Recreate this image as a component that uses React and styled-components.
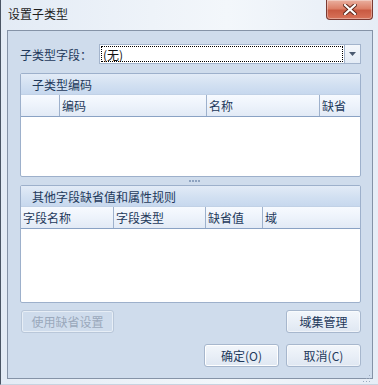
import React from "react";
import styled, { createGlobalStyle } from "styled-components";

const Global = createGlobalStyle`
  html, body { margin: 0; padding: 0; }
  body { width: 378px; height: 385px; overflow: hidden; font-family: "Noto Sans CJK SC", "Noto Sans", sans-serif; font-size: 12px; }
`;

const Window = styled.div`
  width: 378px;
  height: 385px;
  box-sizing: border-box;
  display: flex;
  flex-direction: column;
  background: linear-gradient(90deg, #e3ebf5 0%, #eef3f9 40%, #f3f7fb 60%, #e6edf6 100%);
  border-left: 1px solid #4a5564;
  border-bottom: 1px solid #c8d3e0;
`;

const TitleBar = styled.div`
  height: 30px;
  display: flex;
  align-items: flex-start;
  justify-content: space-between;
  padding-left: 7px;
  padding-right: 5px;
`;

const Title = styled.div`
  margin-top: 5px;
  font-size: 12px;
  line-height: 18px;
  color: #1e1e1e;
`;

const CloseBtn = styled.div`
  width: 45px;
  height: 19px;
  border: 1px solid #7a3a32;
  border-top: none;
  border-radius: 0 0 4px 4px;
  background: linear-gradient(#eab0a0 0%, #dc8068 45%, #c95a42 55%, #d8735a 100%);
  box-shadow: inset 0 0 0 1px rgba(255,255,255,0.35);
  display: flex;
  align-items: center;
  justify-content: center;
`;

const Client = styled.div`
  flex: 1;
  margin: 0 5px 5px 6px;
  border: 1px solid #8593a7;
  background: #cfdcec;
  display: flex;
  flex-direction: column;
  padding: 13px 11px 11px 12px;
  box-sizing: border-box;
`;

const FieldRow = styled.div`
  display: flex;
  align-items: center;
  height: 20px;
`;

const Label = styled.span`
  width: 79px;
  color: #1e395b;
  font-size: 12px;
`;

const Combo = styled.div`
  flex: 1;
  height: 20px;
  box-sizing: border-box;
  border: 1px solid #a3b4cc;
  background: #fff;
  display: flex;
`;

const ComboText = styled.div`
  flex: 1;
  margin: 1px;
  outline: 1px dotted #000;
  outline-offset: -1px;
  display: flex;
  align-items: center;
  padding-left: 2px;
  font-size: 12px;
  color: #111;
`;

const ComboBtn = styled.div`
  width: 15px;
  border-left: 1px solid #a3b4cc;
  background: linear-gradient(#f4f7fb, #e3ebf5);
  display: flex;
  align-items: center;
  justify-content: center;
`;

const Group = styled.div`
  margin-top: ${(p) => p.$mt}px;
  height: ${(p) => p.$h}px;
  box-sizing: border-box;
  border: 1px solid #9db0cb;
  border-radius: 2px;
  display: flex;
  flex-direction: column;
  background: #fff;
  overflow: hidden;
`;

const GroupHeader = styled.div`
  height: 21px;
  flex: none;
  background: linear-gradient(#e2ebf7 0%, #d3e1f2 50%, #c7d8ee 100%);
  border-bottom: 1px solid #c1d1e6;
  color: #1e395b;
  font-size: 12px;
  line-height: 21px;
  padding-left: 11px;
  box-sizing: border-box;
`;

const HeadRow = styled.div`
  display: flex;
  height: 22px;
  flex: none;
  box-sizing: border-box;
  border-bottom: 1px solid #8aa2c4;
  background: linear-gradient(#f7faff 0%, #edf3fb 50%, #e2eaf6 100%);
`;

const HeadCell = styled.div`
  width: ${(p) => p.$w}px;
  flex: ${(p) => (p.$w ? "none" : "1")};
  box-sizing: border-box;
  border-left: ${(p) => (p.$first ? "none" : "1px solid #9eb1cc")};
  padding-left: 2px;
  color: #1e395b;
  font-size: 12px;
  line-height: 21px;
  white-space: nowrap;
`;

const Splitter = styled.div`
  height: 8px;
  display: flex;
  align-items: center;
  justify-content: center;
  gap: 1px;
  padding-left: 7px;
`;

const Dot = styled.span`
  width: 2px;
  height: 2px;
  background: #8ea3c0;
`;

const ButtonRow = styled.div`
  display: flex;
  justify-content: ${(p) => p.$justify};
  gap: 7px;
  margin-top: ${(p) => p.$mt}px;
  padding-left: 1px;
`;

const Button = styled.div`
  width: ${(p) => p.$w}px;
  height: 23px;
  box-sizing: border-box;
  border: 1px solid ${(p) => (p.$disabled ? "#b9c7d9" : "#a7b7cd")};
  border-radius: 3px;
  background: ${(p) =>
    p.$disabled ? "#cfdcec" : "linear-gradient(#f2f6fb 0%, #e9eff7 50%, #dfe7f2 100%)"};
  box-shadow: ${(p) => (p.$default ? "inset 0 0 0 1px #ffffff" : "inset 0 0 0 1px rgba(255,255,255,0.5)")};
  display: flex;
  align-items: center;
  justify-content: center;
  font-size: 12px;
  color: ${(p) => (p.$disabled ? "#9aa8bb" : "#1e395b")};
`;

const Grip = styled.div`
  align-self: flex-end;
  margin-right: -10px;
  margin-bottom: -10px;
  margin-top: auto;
  width: 8px;
  height: 8px;
`;

export default function App() {
  return (
    <>
      <Global />
      <Window>
        <TitleBar>
          <Title>设置子类型</Title>
          <CloseBtn>
            <svg width="14" height="11" viewBox="0 0 14 11">
              <path d="M2 1 L12 10 M12 1 L2 10" stroke="#5a2418" strokeWidth="4" strokeLinecap="square" />
              <path d="M2 1 L12 10 M12 1 L2 10" stroke="#ffffff" strokeWidth="2.2" strokeLinecap="square" />
            </svg>
          </CloseBtn>
        </TitleBar>
        <Client>
          <FieldRow>
            <Label>子类型字段：</Label>
            <Combo>
              <ComboText>(无)</ComboText>
              <ComboBtn>
                <svg width="7" height="4" viewBox="0 0 7 4">
                  <path d="M0 0 H7 L3.5 4 Z" fill="#4a5a70" />
                </svg>
              </ComboBtn>
            </Combo>
          </FieldRow>
          <Group $mt={9} $h={104}>
            <GroupHeader>子类型编码</GroupHeader>
            <HeadRow>
              <HeadCell $first $w={38}></HeadCell>
              <HeadCell $w={147}>编码</HeadCell>
              <HeadCell $w={113}>名称</HeadCell>
              <HeadCell>缺省</HeadCell>
            </HeadRow>
          </Group>
          <Splitter>
            <Dot /><Dot /><Dot /><Dot />
          </Splitter>
          <Group $mt={0} $h={118}>
            <GroupHeader>其他字段缺省值和属性规则</GroupHeader>
            <HeadRow>
              <HeadCell $first $w={92}>字段名称</HeadCell>
              <HeadCell $w={92}>字段类型</HeadCell>
              <HeadCell $w={57}>缺省值</HeadCell>
              <HeadCell>域</HeadCell>
            </HeadRow>
          </Group>
          <ButtonRow $justify="space-between" $mt={7}>
            <Button $w={93} $disabled>使用缺省设置</Button>
            <Button $w={75}>域集管理</Button>
          </ButtonRow>
          <ButtonRow $justify="flex-end" $mt={11}>
            <Button $w={75} $default>确定(O)</Button>
            <Button $w={75}>取消(C)</Button>
          </ButtonRow>
          <Grip>
            <svg width="8" height="8" viewBox="0 0 8 8">
              <rect x="6" y="0" width="1" height="1" fill="#9aaabf" />
              <rect x="3" y="3" width="1" height="1" fill="#9aaabf" />
              <rect x="6" y="3" width="1" height="1" fill="#9aaabf" />
              <rect x="0" y="6" width="1" height="1" fill="#9aaabf" />
              <rect x="3" y="6" width="1" height="1" fill="#9aaabf" />
              <rect x="6" y="6" width="1" height="1" fill="#9aaabf" />
            </svg>
          </Grip>
        </Client>
      </Window>
    </>
  );
}
